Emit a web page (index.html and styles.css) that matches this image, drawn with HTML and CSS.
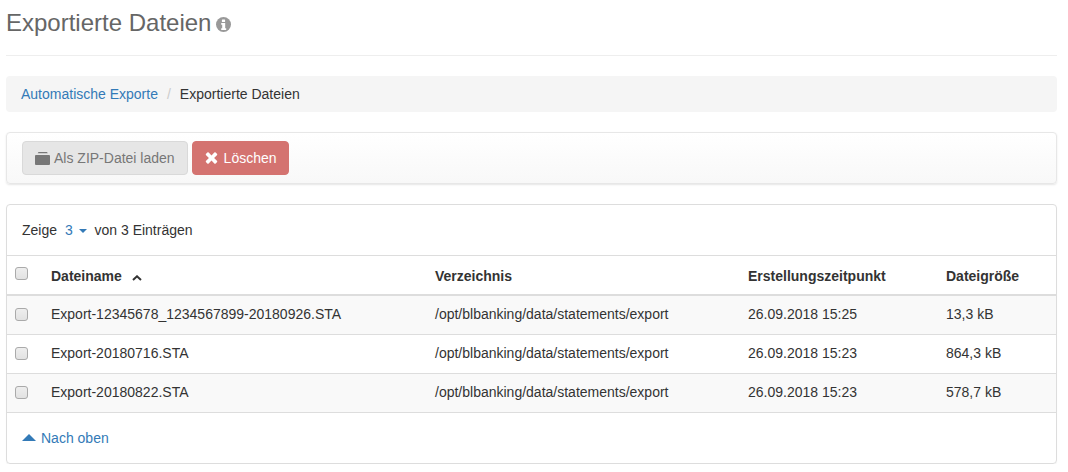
FILE: index.html
```html
<!DOCTYPE html>
<html lang="de">
<head>
    <meta charset="UTF-8">
    <title>Exportierte Dateien</title>
    <link rel="stylesheet" href="styles.css">
</head>
<body>
    <div class="page-header">
        <h1>Exportierte Dateien</h1>
        <svg class="info-icon" viewBox="0 0 15 15" width="15" height="15">
            <circle cx="7.5" cy="7.500" r="7.5" fill="#999"/>
            <rect x="5.900" y="2.400" width="3.200" height="2.500" rx="0.5" fill="#fff"/>
            <path d="M5.200 6h4v5.200h1V13H5.200v-1.800h1V7.800h-1z" fill="#fff"/>
        </svg>
    </div>

    <ol class="breadcrumb">
        <li><a href="#">Automatische Exporte</a></li>
        <li class="separator">/</li>
        <li>Exportierte Dateien</li>
    </ol>

    <div class="toolbar">
        <button class="btn btn-default" type="button">
            <svg viewBox="0 0 15 13" width="15" height="13"><path d="M3.500 0h8.500l.8 1.200H2.700zM.9 3h13.200c.5 0 .9.400.9.900v8.200c0 .5-.4.900-.9.900H.9c-.5 0-.9-.4-.9-.9V3.900c0-.5.400-.9.900-.9z" fill="#777"/></svg>
            Als ZIP-Datei laden
        </button>
        <button class="btn btn-danger" type="button">
            <svg viewBox="0 0 12 12" width="13" height="12"><path d="M3.200.6 6 3.400 8.800.6a1 1 0 0 1 1.400 0l1.200 1.200a1 1 0 0 1 0 1.400L8.600 6l2.800 2.800a1 1 0 0 1 0 1.400l-1.200 1.200a1 1 0 0 1-1.400 0L6 8.600l-2.800 2.800a1 1 0 0 1-1.400 0L.6 10.200a1 1 0 0 1 0-1.400L3.400 6 .6 3.200a1 1 0 0 1 0-1.400L1.800.6a1 1 0 0 1 1.400 0z" fill="#fff"/></svg>
            Löschen
        </button>
    </div>

    <div class="panel">
        <div class="panel-top">
            Zeige <a class="page-size" href="#">3 <span class="caret"></span></a> von 3 Einträgen
        </div>
        <table class="files">
            <thead>
                <tr>
                    <th class="col-check"><span class="check"></span></th>
                    <th class="col-name">Dateiname <span class="sort-up"><svg viewBox="0 0 10 6" width="10" height="6"><path d="M1 5 5 1.300 9 5" fill="none" stroke="#333" stroke-width="2"/></svg></span></th>
                    <th class="col-dir">Verzeichnis</th>
                    <th class="col-date">Erstellungszeitpunkt</th>
                    <th>Dateigröße</th>
                </tr>
            </thead>
            <tbody>
                <tr>
                    <td><span class="check"></span></td>
                    <td>Export-12345678_1234567899-20180926.STA</td>
                    <td>/opt/blbanking/data/statements/export</td>
                    <td>26.09.2018 15:25</td>
                    <td>13,3 kB</td>
                </tr>
                <tr>
                    <td><span class="check"></span></td>
                    <td>Export-20180716.STA</td>
                    <td>/opt/blbanking/data/statements/export</td>
                    <td>26.09.2018 15:23</td>
                    <td>864,3 kB</td>
                </tr>
                <tr>
                    <td><span class="check"></span></td>
                    <td>Export-20180822.STA</td>
                    <td>/opt/blbanking/data/statements/export</td>
                    <td>26.09.2018 15:23</td>
                    <td>578,7 kB</td>
                </tr>
            </tbody>
        </table>
        <div class="panel-bottom">
            <a href="#"><span class="arrow-up"></span>Nach oben</a>
        </div>
    </div>
</body>
</html>
```

FILE: styles.css
```css
body {
    font-family: "Liberation Sans", Arial, sans-serif;
    font-size: 14px;
    line-height: 20px;
    color: #333;
    background: #fff;
    margin: 0;
    padding: 0 11px 0 6px;
}
a {
    color: #337ab7;
    text-decoration: none;
}
.page-header {
    display: flex;
    align-items: center;
    height: 46px;
    padding-bottom: 9px;
    border-bottom: 1px solid #eee;
    margin-bottom: 20px;
}
h1 {
    margin: 0;
    font-size: 24px;
    font-weight: 400;
    line-height: 30px;
    color: #666;
}
.info-icon {
    margin-left: 5px;
    margin-top: 3px;
}
.breadcrumb {
    display: flex;
    list-style: none;
    margin: 0 0 20px;
    padding: 8px 15px;
    background: #f5f5f5;
    border-radius: 4px;
}
.separator {
    color: #ccc;
    padding: 0 9px;
}
.toolbar {
    display: flex;
    gap: 4px;
    padding: 8px 15px;
    margin-bottom: 20px;
    background: linear-gradient(#fff, #f8f8f8);
    border: 1px solid #e7e7e7;
    border-radius: 4px;
    box-shadow: 0 1px 2px rgba(0,0,0,0.1);
}
.btn {
    display: flex;
    align-items: center;
    gap: 4px;
    height: 34px;
    padding: 0 12px;
    font: inherit;
    border: 1px solid transparent;
    border-radius: 4px;
}
.btn-default {
    color: #777;
    background: #e6e6e6;
    border-color: #d9d9d9;
}
.btn-danger {
    gap: 6px;
    padding-right: 11px;
    color: #fff;
    background: #d47370;
    border-color: #d47370;
}
.panel {
    border: 1px solid #ddd;
    border-radius: 4px;
    box-shadow: 0 1px 1px rgba(0,0,0,0.05);
}
.panel-top {
    padding: 15px;
    height: 20px;
}
.page-size {
    margin: 0 4px;
}
.caret {
    display: inline-block;
    margin-left: 2px;
    vertical-align: middle;
    border-top: 4px solid #337ab7;
    border-left: 4px solid transparent;
    border-right: 4px solid transparent;
}
.files {
    width: 100%;
    border-collapse: collapse;
    table-layout: fixed;
}
.files th, .files td {
    padding: 8px 8px 10px;
    text-align: left;
    border-top: 1px solid #ddd;
}
.files th {
    padding: 10px 8px 8px;
    border-bottom: 2px solid #ddd;
}
.files tbody td {
    background: #f9f9f9;
}
.files tbody tr:nth-child(2) td {
    background: #fff;
}
.files tbody tr:last-child td {
    border-bottom: 1px solid #ddd;
}
.files .col-check {
    width: 20px;
    padding: 8px 8px 12px;
}
.col-name { width: 368px; }
.col-dir { width: 297px; }
.col-date { width: 182px; }
.check {
    display: block;
    box-sizing: border-box;
    width: 13px;
    height: 13px;
    background: linear-gradient(#eee, #e2e2e2);
    border: 1px solid #aaa;
    border-radius: 3px;
}
.sort-up {
    margin-left: 6px;
}
.panel-bottom {
    padding: 15px;
    height: 20px;
}
.arrow-up {
    display: inline-block;
    margin-right: 5px;
    vertical-align: 2px;
    border-bottom: 7px solid #337ab7;
    border-left: 7px solid transparent;
    border-right: 7px solid transparent;
}
```
